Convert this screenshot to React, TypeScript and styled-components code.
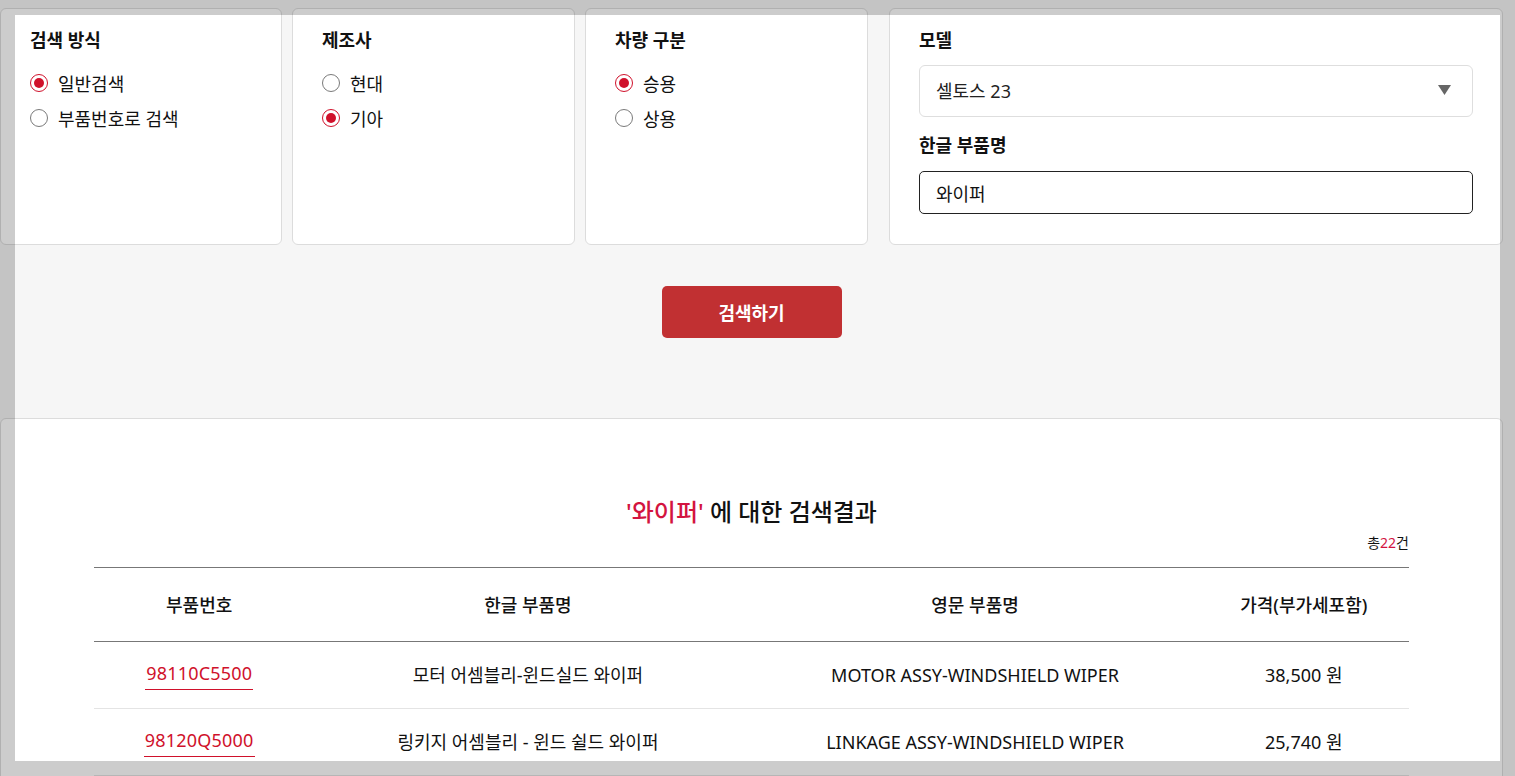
import React from "react";
import styled, { createGlobalStyle } from "styled-components";

const GlobalStyle = createGlobalStyle`
  * { box-sizing: border-box; }
  html, body { margin: 0; padding: 0; }
  body {
    background: #f6f6f6;
    font-family: "Noto Sans", "Noto Sans CJK KR", sans-serif;
    color: #111;
  }
`;

const RED = "#d0112b";

const Page = styled.div`
  width: 1503px;
  padding-top: 8px;
`;

const FilterRow = styled.div`
  display: flex;
  gap: 10px;
`;

const Card = styled.section<{ $width: number; $offset?: number }>`
  width: ${(p) => p.$width}px;
  height: 237px;
  margin-left: ${(p) => p.$offset ?? 0}px;
  background: #fff;
  border: 1px solid #dcdcdc;
  border-radius: 6px;
  padding: 19px 29px 0;
`;

const Title = styled.h3`
  margin: 0;
  font-size: 18px;
  line-height: 24px;
  font-weight: 700;
  color: #111;
`;

const RadioList = styled.div`
  margin-top: 19px;
  display: flex;
  flex-direction: column;
  gap: 11px;
`;

const RadioRow = styled.label`
  display: flex;
  align-items: center;
  height: 24px;
  font-size: 18px;
  color: #111;
  gap: 10px;
`;

const RadioMark = styled.span<{ $checked?: boolean }>`
  width: 18px;
  height: 18px;
  border-radius: 50%;
  border: 1px solid ${(p) => (p.$checked ? RED : "#7a7a7a")};
  display: flex;
  align-items: center;
  justify-content: center;
  flex-shrink: 0;
  &::after {
    content: "";
    width: 10px;
    height: 10px;
    border-radius: 50%;
    background: ${(p) => (p.$checked ? RED : "transparent")};
  }
`;

const SelectBox = styled.div`
  margin-top: 13px;
  height: 52px;
  border: 1px solid #dedede;
  border-radius: 6px;
  padding: 0 21px 2px 16px;
  display: flex;
  align-items: center;
  justify-content: space-between;
  font-size: 18px;
  color: #222;
`;

const FieldLabel = styled(Title)`
  margin-top: 16px;
`;

const TextInput = styled.input`
  display: block;
  width: 100%;
  margin-top: 14px;
  height: 43px;
  border: 1px solid #222;
  border-radius: 5px;
  padding: 0 16px;
  font-family: inherit;
  font-size: 18px;
  color: #111;
  background: #fff;
  outline: none;
`;

const ButtonArea = styled.div`
  display: flex;
  justify-content: center;
  padding-top: 41px;
`;

const SearchButton = styled.button`
  width: 180px;
  height: 52px;
  border: none;
  border-radius: 5px;
  background: #c13032;
  color: #fff;
  font-family: inherit;
  font-size: 18px;
  font-weight: 700;
`;

const Results = styled.section`
  margin-top: 80px;
  background: #fff;
  border: 1px solid #dcdcdc;
  border-radius: 6px;
  padding: 76px 93px 40px;
`;

const ResultTitle = styled.h2`
  margin: 0;
  text-align: center;
  font-size: 24px;
  line-height: 34px;
  font-weight: 500;
  color: #111;
`;

const Keyword = styled.span`
  color: #d3143f;
`;

const Count = styled.div`
  margin-top: 4px;
  text-align: right;
  font-size: 14px;
  line-height: 20px;
  color: #111;
`;

const Table = styled.div`
  margin-top: 14px;
  border-top: 1px solid #777;
`;

const Row = styled.div<{ $head?: boolean }>`
  display: grid;
  grid-template-columns: 16% 34% 34% 16%;
  align-items: center;
  height: ${(p) => (p.$head ? 74 : 67)}px;
  border-bottom: 1px solid ${(p) => (p.$head ? "#777" : "#e4e4e4")};
  font-size: 18px;
  font-weight: ${(p) => (p.$head ? 500 : 400)};
  color: #111;
`;

const Cell = styled.div`
  text-align: center;
  line-height: 24px;
`;

const PartLink = styled.a`
  display: inline-block;
  color: ${RED};
  text-decoration: none;
  border-bottom: 1px solid ${RED};
  padding: 0 1px 4px;
  line-height: 24px;
  letter-spacing: 0.2px;
`;

const Spotlight = styled.div`
  position: fixed;
  inset: 15px;
  pointer-events: none;
  box-shadow: 0 0 0 3000px rgba(0, 0, 0, 0.2);
`;

function Caret() {
  return (
    <svg width="13" height="10" viewBox="0 0 13 10" aria-hidden>
      <path d="M0 0 H13 L6.5 10 Z" fill="#666" />
    </svg>
  );
}

type Opt = { label: string; checked?: boolean };

function RadioGroup({ items }: { items: Opt[] }) {
  return (
    <RadioList>
      {items.map((o) => (
        <RadioRow key={o.label}>
          <RadioMark $checked={o.checked} />
          {o.label}
        </RadioRow>
      ))}
    </RadioList>
  );
}

const rows = [
  {
    no: "98110C5500",
    ko: "모터 어셈블리-윈드실드 와이퍼",
    en: "MOTOR ASSY-WINDSHIELD WIPER",
    price: "38,500 원",
  },
  {
    no: "98120Q5000",
    ko: "링키지 어셈블리 - 윈드 쉴드 와이퍼",
    en: "LINKAGE ASSY-WINDSHIELD WIPER",
    price: "25,740 원",
  },
];

export default function App() {
  return (
    <>
      <GlobalStyle />
      <Page>
        <FilterRow>
          <Card $width={282}>
            <Title>검색 방식</Title>
            <RadioGroup items={[{ label: "일반검색", checked: true }, { label: "부품번호로 검색" }]} />
          </Card>
          <Card $width={283}>
            <Title>제조사</Title>
            <RadioGroup items={[{ label: "현대" }, { label: "기아", checked: true }]} />
          </Card>
          <Card $width={283}>
            <Title>차량 구분</Title>
            <RadioGroup items={[{ label: "승용", checked: true }, { label: "상용" }]} />
          </Card>
          <Card $width={614} $offset={11}>
            <Title>모델</Title>
            <SelectBox>
              <span>셀토스 23</span>
              <Caret />
            </SelectBox>
            <FieldLabel>한글 부품명</FieldLabel>
            <TextInput defaultValue="와이퍼" />
          </Card>
        </FilterRow>
        <ButtonArea>
          <SearchButton>검색하기</SearchButton>
        </ButtonArea>
        <Results>
          <ResultTitle>
            <Keyword>'와이퍼'</Keyword> 에 대한 검색결과
          </ResultTitle>
          <Count>
            총<Keyword>22</Keyword>건
          </Count>
          <Table>
            <Row $head>
              <Cell>부품번호</Cell>
              <Cell>한글 부품명</Cell>
              <Cell>영문 부품명</Cell>
              <Cell>가격(부가세포함)</Cell>
            </Row>
            {rows.map((r) => (
              <Row key={r.no}>
                <Cell>
                  <PartLink href="#">{r.no}</PartLink>
                </Cell>
                <Cell>{r.ko}</Cell>
                <Cell>{r.en}</Cell>
                <Cell>{r.price}</Cell>
              </Row>
            ))}
          </Table>
        </Results>
      </Page>
      <Spotlight />
    </>
  );
}
